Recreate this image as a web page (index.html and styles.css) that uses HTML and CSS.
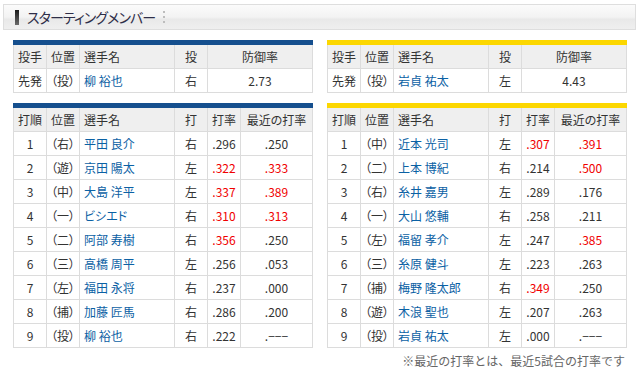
FILE: index.html
```html
<!DOCTYPE html>
<html lang="ja">
<head>
<meta charset="utf-8">
<title>スターティングメンバー</title>
<link rel="stylesheet" href="styles.css">
</head>
<body>
<div class="page">
  <div class="title-bar">
    <span class="title-mark"></span>
    <h2 class="title">スターティングメンバー</h2>
    <span class="title-dots"><i></i><i></i><i></i></span>
  </div>

  <div class="teams">
    <section class="team team--blue">
      <div class="tbl tbl--pitcher">
        <div class="row row--head">
          <div class="c">投手</div><div class="c">位置</div><div class="c c--name">選手名</div><div class="c">投</div><div class="c">防御率</div>
        </div>
        <div class="row">
          <div class="c">先発</div><div class="c">（投）</div><div class="c c--name"><a class="player">柳 裕也</a></div><div class="c">右</div><div class="c">2.73</div>
        </div>
      </div>

      <div class="tbl tbl--lineup">
        <div class="row row--head">
          <div class="c">打順</div><div class="c">位置</div><div class="c c--name">選手名</div><div class="c">打</div><div class="c">打率</div><div class="c">最近の打率</div>
        </div>
        <div class="row"><div class="c">1</div><div class="c">（右）</div><div class="c c--name"><a class="player">平田 良介</a></div><div class="c">右</div><div class="c">.296</div><div class="c">.250</div></div>
        <div class="row"><div class="c">2</div><div class="c">（遊）</div><div class="c c--name"><a class="player">京田 陽太</a></div><div class="c">左</div><div class="c hot">.322</div><div class="c hot">.333</div></div>
        <div class="row"><div class="c">3</div><div class="c">（中）</div><div class="c c--name"><a class="player">大島 洋平</a></div><div class="c">左</div><div class="c hot">.337</div><div class="c hot">.389</div></div>
        <div class="row"><div class="c">4</div><div class="c">（一）</div><div class="c c--name"><a class="player">ビシエド</a></div><div class="c">右</div><div class="c hot">.310</div><div class="c hot">.313</div></div>
        <div class="row"><div class="c">5</div><div class="c">（二）</div><div class="c c--name"><a class="player">阿部 寿樹</a></div><div class="c">右</div><div class="c hot">.356</div><div class="c">.250</div></div>
        <div class="row"><div class="c">6</div><div class="c">（三）</div><div class="c c--name"><a class="player">高橋 周平</a></div><div class="c">左</div><div class="c">.256</div><div class="c">.053</div></div>
        <div class="row"><div class="c">7</div><div class="c">（左）</div><div class="c c--name"><a class="player">福田 永将</a></div><div class="c">右</div><div class="c">.237</div><div class="c">.000</div></div>
        <div class="row"><div class="c">8</div><div class="c">（捕）</div><div class="c c--name"><a class="player">加藤 匠馬</a></div><div class="c">右</div><div class="c">.286</div><div class="c">.200</div></div>
        <div class="row"><div class="c">9</div><div class="c">（投）</div><div class="c c--name"><a class="player">柳 裕也</a></div><div class="c">右</div><div class="c">.222</div><div class="c">.−−−</div></div>
      </div>
    </section>

    <section class="team team--yellow">
      <div class="tbl tbl--pitcher">
        <div class="row row--head">
          <div class="c">投手</div><div class="c">位置</div><div class="c c--name">選手名</div><div class="c">投</div><div class="c">防御率</div>
        </div>
        <div class="row">
          <div class="c">先発</div><div class="c">（投）</div><div class="c c--name"><a class="player">岩貞 祐太</a></div><div class="c">左</div><div class="c">4.43</div>
        </div>
      </div>

      <div class="tbl tbl--lineup">
        <div class="row row--head">
          <div class="c">打順</div><div class="c">位置</div><div class="c c--name">選手名</div><div class="c">打</div><div class="c">打率</div><div class="c">最近の打率</div>
        </div>
        <div class="row"><div class="c">1</div><div class="c">（中）</div><div class="c c--name"><a class="player">近本 光司</a></div><div class="c">左</div><div class="c hot">.307</div><div class="c hot">.391</div></div>
        <div class="row"><div class="c">2</div><div class="c">（二）</div><div class="c c--name"><a class="player">上本 博紀</a></div><div class="c">右</div><div class="c">.214</div><div class="c hot">.500</div></div>
        <div class="row"><div class="c">3</div><div class="c">（右）</div><div class="c c--name"><a class="player">糸井 嘉男</a></div><div class="c">左</div><div class="c">.289</div><div class="c">.176</div></div>
        <div class="row"><div class="c">4</div><div class="c">（一）</div><div class="c c--name"><a class="player">大山 悠輔</a></div><div class="c">右</div><div class="c">.258</div><div class="c">.211</div></div>
        <div class="row"><div class="c">5</div><div class="c">（左）</div><div class="c c--name"><a class="player">福留 孝介</a></div><div class="c">左</div><div class="c">.247</div><div class="c hot">.385</div></div>
        <div class="row"><div class="c">6</div><div class="c">（三）</div><div class="c c--name"><a class="player">糸原 健斗</a></div><div class="c">左</div><div class="c">.223</div><div class="c">.263</div></div>
        <div class="row"><div class="c">7</div><div class="c">（捕）</div><div class="c c--name"><a class="player">梅野 隆太郎</a></div><div class="c">右</div><div class="c hot">.349</div><div class="c">.250</div></div>
        <div class="row"><div class="c">8</div><div class="c">（遊）</div><div class="c c--name"><a class="player">木浪 聖也</a></div><div class="c">左</div><div class="c">.207</div><div class="c">.263</div></div>
        <div class="row"><div class="c">9</div><div class="c">（投）</div><div class="c c--name"><a class="player">岩貞 祐太</a></div><div class="c">左</div><div class="c">.000</div><div class="c">.−−−</div></div>
      </div>
      <p class="note">※最近の打率とは、最近5試合の打率です</p>
    </section>
  </div>
</div>
</body>
</html>
```

FILE: styles.css
```css
html, body {
  margin: 0;
  padding: 0;
  background: #fff;
}

body {
  font-family: "Noto Sans CJK JP", "Noto Sans", sans-serif;
  font-size: 12px;
  color: #333;
}

.page {
  width: 643px;
  padding-top: 4px;
}

.title-bar {
  display: flex;
  align-items: center;
  height: 26px;
  box-sizing: border-box;
  margin: 0 7px 0 3px;
  padding-left: 11px;
  border: 1px solid #dedede;
  background: linear-gradient(#fbfbfb 0%, #f3f3f3 50%, #e9e9e9 60%, #efefef 100%);
}

.title-mark {
  width: 4px;
  height: 15px;
  background: linear-gradient(#1a1a1a, #6a6a6a);
}

.title {
  margin: 0 0 0 8px;
  font-size: 14px;
  font-weight: normal;
  line-height: 1;
  color: #2e2e48;
  font-feature-settings: "palt";
  letter-spacing: -0.9px;
}

.title-dots {
  display: flex;
  flex-direction: column;
  gap: 3px;
  margin-left: 8px;
}

.title-dots i {
  display: block;
  width: 2px;
  height: 2px;
  background: #bdbdbd;
}

.teams {
  display: grid;
  grid-template-columns: 300px 300px;
  column-gap: 14px;
  padding-left: 13px;
}

.team--blue { --team: #154f8e; }
.team--yellow { --team: #fcd700; }

.tbl {
  margin-top: 10px;
  border-top: 5px solid var(--team);
}

.row {
  display: grid;
}

.tbl--pitcher .row {
  grid-template-columns: 34px 33px 95px 33px 105px;
}

.tbl--lineup .row {
  grid-template-columns: 34px 33px 95px 33px 33px 72px;
}

.c {
  display: flex;
  align-items: center;
  justify-content: center;
  height: 24px;
  box-sizing: border-box;
  border-right: 1px solid #dcdcdc;
  border-bottom: 1px solid #dcdcdc;
  white-space: nowrap;
  font-feature-settings: "palt";
  line-height: 1;
}

.c:first-child {
  border-left: 1px solid #dcdcdc;
}

.row--head .c {
  background: #efefef;
  color: #333;
}

.c--name {
  justify-content: flex-start;
  padding-left: 4px;
}

.player {
  color: #0b61a4;
  text-decoration: none;
}

.hot {
  color: #f00000;
}

.note {
  margin: 6px 2px 0 0;
  text-align: right;
  color: #666;
  font-size: 12px;
  line-height: 14px;
}
```
